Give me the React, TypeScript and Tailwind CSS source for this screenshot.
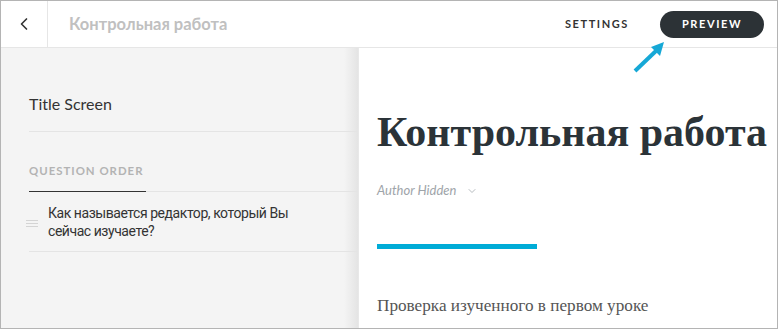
import { ChevronDown, ChevronLeft } from "lucide-react";

function DragHandle() {
  return (
    <svg width="12" height="8" viewBox="0 0 12 8" className="shrink-0">
      <rect x="0" y="0" width="12" height="1" fill="#d4d4d4" />
      <rect x="0" y="3" width="12" height="1" fill="#d4d4d4" />
      <rect x="0" y="6" width="12" height="1" fill="#d4d4d4" />
    </svg>
  );
}

function Arrow() {
  return (
    <svg width="40" height="40" viewBox="0 0 40 40" className="pointer-events-none absolute left-[628px] top-[37px]">
      <line x1="6" y1="33" x2="29" y2="11" stroke="#16a8d6" strokeWidth="4" />
      <polygon points="35,4 22,9 31,18" fill="#16a8d6" />
    </svg>
  );
}

export default function App() {
  return (
    <div className="relative flex h-[329px] w-[778px] flex-col overflow-hidden border border-[#b4b4b4] bg-white font-['Lato','Noto_Sans',sans-serif]">
      <header className="flex h-[47px] shrink-0 items-center border-b border-[#e6e6e6]">
        <div className="flex h-full w-[47px] items-center justify-center border-r border-[#e6e6e6] text-[#333]">
          <ChevronLeft size={20} strokeWidth={2} />
        </div>
        <div className="pl-[21px] text-[16.5px] font-bold text-[#c0c0c0]">Контрольная работа</div>
        <div className="ml-auto flex items-center">
          <span className="mr-[31px] text-[11px] font-bold tracking-[1.6px] text-[#333]">SETTINGS</span>
          <button className="mr-[13px] h-[27px] w-[104px] rounded-full bg-[#2c3236] text-[11px] font-bold tracking-[1.6px] text-white">
            PREVIEW
          </button>
        </div>
      </header>
      <Arrow />
      <div className="flex min-h-0 flex-1">
        <aside className="relative w-[357px] shrink-0 bg-[#f4f4f4] pl-[28px]">
          <div className="pointer-events-none absolute inset-y-0 right-0 w-[14px] bg-gradient-to-r from-transparent to-[#e4e4e4]" />
          <div className="flex h-[84px] items-center border-b border-[#e4e4e4] pt-[31px] pb-[3px]">
            <span className="text-[16px] text-[#333]">Title Screen</span>
          </div>
          <div className="relative h-[60px] border-b border-[#e4e4e4]">
            <span className="absolute left-0 top-[30px] text-[11.4px] font-bold tracking-[1px] text-[#b3b3b3]">QUESTION ORDER</span>
            <div className="absolute bottom-[-1px] left-0 h-px w-[117px] bg-[#333]" />
          </div>
          <div className="flex h-[60px] items-center border-b border-[#e4e4e4]">
            <div className="-ml-[3px] mr-[10px] mt-[4px]">
              <DragHandle />
            </div>
            <p className="w-[270px] font-['Roboto',sans-serif] text-[14px] leading-[18px] tracking-[-0.45px] text-[#333]">
              Как называется редактор, который Вы сейчас изучаете?
            </p>
          </div>
        </aside>
        <main className="flex-1 border-l border-[#e8e8e8] pl-[18px]">
          <h1 className="mt-[60px] whitespace-nowrap font-['Liberation_Serif',serif] text-[42px] leading-[48px] font-bold text-[#2b3338]">
            Контрольная работа
          </h1>
          <div className="mt-[25px] flex items-center text-[13px] italic text-[#9ea4a9]">
            Author Hidden
            <ChevronDown size={12} strokeWidth={1.5} className="ml-[10px]" />
          </div>
          <div className="mt-[43px] h-[5px] w-[160px] bg-[#00acd7]" />
          <p className="mt-[44px] font-['Liberation_Serif',serif] text-[17.2px] text-[#555]">Проверка изученного в первом уроке</p>
        </main>
      </div>
    </div>
  );
}
